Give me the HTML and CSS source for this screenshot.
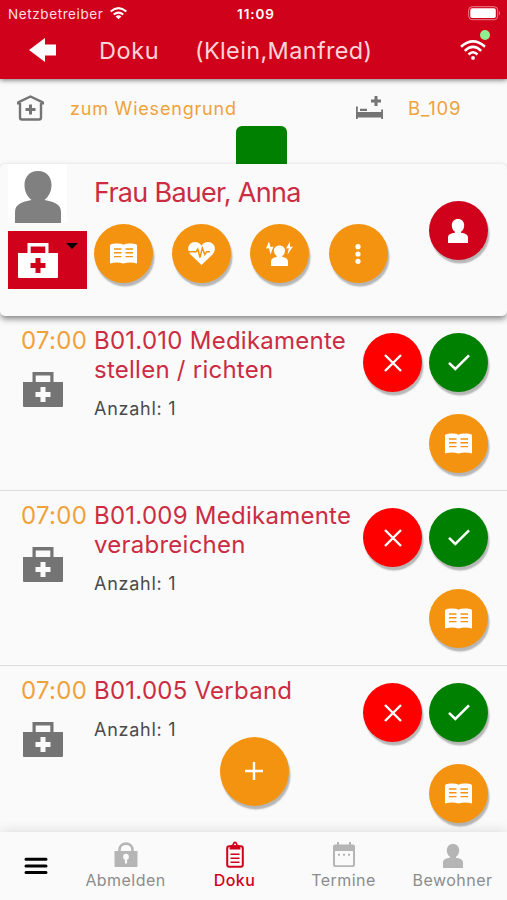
FILE: index.html
```html
<!DOCTYPE html>
<html lang="de">
<head>
    <meta charset="UTF-8">
    <meta name="viewport" content="width=device-width, initial-scale=1.0">
    <title>Doku</title>
    <link rel="stylesheet" href="styles.css">
</head>
<body>
    <!-- icons -->
    <svg class="sprite">
        <symbol id="wifi" viewBox="0 0 26 20">
            <g fill="none" stroke="currentColor" stroke-width="2.500">
                <path d="M1 6.800Q13-4 25 6.800"/>
                <path d="M4.800 10.800Q13 3 21.200 10.800"/>
                <path d="M8.500 14.500Q13 10 17.500 14.500"/>
            </g>
            <circle cx="13" cy="17.900" r="1.900" fill="currentColor"/>
        </symbol>
        <symbol id="book" viewBox="0 0 27 21">
            <path fill="currentColor" d="M0 2Q1 .6 5 .5Q11 0 13.500 1.800Q16 0 22 .5Q26 .6 27 2V20.500Q20 18.500 13.500 20.500Q7 18.500 0 20.500Z"/>
            <path fill="none" stroke="#f4930f" stroke-width="1.400" d="M4 6H11.500M4 9.800H11.500M4 13.600H11.500M15.500 6H23M15.500 9.800H23M15.500 13.600H23"/>
        </symbol>
        <symbol id="case" viewBox="0 0 40 35">
            <path fill="currentColor" fill-rule="evenodd" d="M9.500 0H30.500V10H40V34Q40 35 39 35H1Q0 35 0 34V10H9.500ZM12.700 3.400V10H27.300V3.400ZM17.500 15V20H12.500V25H17.500V30H22.500V25H27.500V20H22.500V15Z"/>
        </symbol>
        <symbol id="user" viewBox="0 0 46 52">
            <path fill="currentColor" d="M23 0C31.500 0 36.500 6 36.500 14C36.500 20 34 25.500 29.500 29C39 31 46 33 46 41V52H0V41C0 33 7 31 16.500 29C12 25.500 9.500 20 9.500 14C9.500 6 14.500 0 23 0Z"/>
        </symbol>
        <symbol id="person" viewBox="0 0 20 24">
            <path fill="currentColor" d="M10 0C13.800 0 16.200 2.600 16.200 6.200C16.200 9.200 14.900 11.500 13 12.800V13.800C17 14.300 20 15.600 20 18.600V24H0V18.600C0 15.600 3 14.300 7 13.800V12.800C5.100 11.500 3.800 9.200 3.800 6.200C3.800 2.600 6.200 0 10 0Z"/>
        </symbol>
        <symbol id="cross" viewBox="0 0 18 18">
            <path fill="none" stroke="currentColor" stroke-width="2.400" d="M1 1L17 17M17 1L1 17"/>
        </symbol>
        <symbol id="check" viewBox="0 0 22 17">
            <path fill="none" stroke="currentColor" stroke-width="2.500" d="M1 8.800L7.300 15L21 1.300"/>
        </symbol>
    </svg>

    <div class="app">
        <div class="status">
            <div class="carrier"><span>Netzbetreiber</span>
                <svg width="17" height="13" viewBox="0 0 17 13"><g fill="none" stroke="#fff" stroke-width="2"><path d="M.7 4.500Q8.500-2.300 16.300 4.500"/><path d="M3.700 7.600Q8.500 3.600 13.300 7.600"/></g><path fill="#fff" d="M5.600 9.400Q8.500 7.200 11.400 9.400L8.500 12.300Z"/></svg>
            </div>
            <div class="clock">11:09</div>
            <div class="battery">
                <svg width="33" height="15" viewBox="0 0 33 15"><rect x=".7" y=".7" width="29" height="13" rx="3.500" fill="none" stroke="#e9808c"/><rect x="2.300" y="2.300" width="25.500" height="9.800" rx="1.800" fill="#fff"/><path d="M31 5Q33 7.200 31 9.500Z" fill="#e9808c"/></svg>
            </div>
        </div>
        <div class="header">
            <svg class="back" width="27" height="24" viewBox="0 0 27 24"><path fill="#fff" d="M0 12L16 0V6.500H27V17.500H16V24Z"/></svg>
            <div class="title">Doku</div>
            <div class="name">(Klein,Manfred)</div>
            <div class="signal">
                <svg width="26" height="20"><use href="#wifi"/></svg>
                <div class="online"></div>
            </div>
        </div>

        <div class="place">
            <svg class="house" width="27" height="26" viewBox="0 0 27 26"><path fill="none" stroke="#747474" stroke-width="2.400" stroke-linejoin="round" d="M1.200 9.500V7.300L13.500 1.500L25.800 7.300V9.500M3 8V22.500Q3 24.500 5 24.500H22Q24 24.500 24 22.500V8"/><path fill="none" stroke="#747474" stroke-width="3" d="M13.500 9.500V19.500M8.500 14.500H18.500"/></svg>
            <div class="house-name">zum Wiesengrund</div>
            <svg class="bed" width="27" height="24" viewBox="0 0 27 24"><path fill="#747474" d="M0 10.500H1.800V16H25.200V13.500H27V23H25.200V21.500H1.800V23H0ZM4 12.800H11V15H4ZM18.500 0H21.500V3.500H25V6.500H21.500V10H18.500V6.500H15V3.500H18.500Z"/></svg>
            <div class="room">B_109</div>
        </div>
        <div class="tab"></div>

        <div class="patient">
            <div class="patient-side">
                <div class="photo"><svg width="46" height="52"><use href="#user"/></svg></div>
                <div class="kit">
                    <svg width="40" height="35"><use href="#case"/></svg>
                    <div class="arrow"></div>
                </div>
            </div>
            <div class="patient-main">
                <div class="patient-name">Frau Bauer, Anna</div>
                <div class="actions">
                    <div class="btn orange"><svg width="27" height="21"><use href="#book"/></svg></div>
                    <div class="btn orange">
                        <svg width="27" height="23" viewBox="0 0 27 23"><path fill="#fff" d="M13.500 23L2.500 12.500C-1 8.500-.3 3.500 3 1.300C6.500-1 11.300 0 13.500 3.800C15.700 0 20.500-1 24 1.300C27.300 3.500 28 8.500 24.500 12.500Z"/><path fill="none" stroke="#f4930f" stroke-width="1.500" d="M0 9.800H8L9.800 7L12 15.500L14.300 6L16.800 12.500L18.500 9.800H22"/></svg>
                    </div>
                    <div class="btn orange">
                        <svg width="27" height="25" viewBox="0 0 27 25"><path fill="#fff" d="M13.500 4.500C16.800 4.500 19 6.700 19 9.500C19 12 18 13.900 16.300 15V16C20 16.500 22 18 22 20.500V25H5V20.500C5 18 7 16.500 10.700 16V15C9 13.900 8 12 8 9.500C8 6.700 10.200 4.500 13.500 4.500ZM3 .5L0 7.500L3 7.200L4.500 13.500L7.500 5.500L4.500 6ZM24 .5L20 7.500L22.800 7.200L21.500 13.500L27 5.500L24 6Z"/></svg>
                    </div>
                    <div class="btn orange">
                        <svg width="6" height="20" viewBox="0 0 6 20"><g fill="#fff"><circle cx="3" cy="2.700" r="2.600"/><circle cx="3" cy="10" r="2.600"/><circle cx="3" cy="17.300" r="2.600"/></g></svg>
                    </div>
                </div>
            </div>
            <div class="btn red patient-btn"><svg width="20" height="24"><use href="#person"/></svg></div>
        </div>

        <div class="list">
            <div class="item">
                <div class="item-side">
                    <div class="time">07:00</div>
                    <svg width="40" height="35"><use href="#case"/></svg>
                </div>
                <div class="item-main">
                    <div class="task">B01.010 Medikamente<br>stellen / richten</div>
                    <div class="count">Anzahl: 1</div>
                </div>
                <div class="item-btns">
                    <div class="btn no"><svg width="18" height="18"><use href="#cross"/></svg></div>
                    <div class="btn yes"><svg width="22" height="17"><use href="#check"/></svg></div>
                    <div class="btn orange"><svg width="27" height="21"><use href="#book"/></svg></div>
                </div>
            </div>
            <div class="item">
                <div class="item-side">
                    <div class="time">07:00</div>
                    <svg width="40" height="35"><use href="#case"/></svg>
                </div>
                <div class="item-main">
                    <div class="task">B01.009 Medikamente<br>verabreichen</div>
                    <div class="count">Anzahl: 1</div>
                </div>
                <div class="item-btns">
                    <div class="btn no"><svg width="18" height="18"><use href="#cross"/></svg></div>
                    <div class="btn yes"><svg width="22" height="17"><use href="#check"/></svg></div>
                    <div class="btn orange"><svg width="27" height="21"><use href="#book"/></svg></div>
                </div>
            </div>
            <div class="item">
                <div class="item-side">
                    <div class="time">07:00</div>
                    <svg width="40" height="35"><use href="#case"/></svg>
                </div>
                <div class="item-main">
                    <div class="task">B01.005 Verband</div>
                    <div class="count">Anzahl: 1</div>
                </div>
                <div class="item-btns">
                    <div class="btn no"><svg width="18" height="18"><use href="#cross"/></svg></div>
                    <div class="btn yes"><svg width="22" height="17"><use href="#check"/></svg></div>
                    <div class="btn orange"><svg width="27" height="21"><use href="#book"/></svg></div>
                </div>
            </div>
        </div>

        <div class="btn orange add">
            <svg width="18" height="18" viewBox="0 0 18 18"><path fill="none" stroke="#fff" stroke-width="2.400" d="M9 0V18M0 9H18"/></svg>
        </div>

        <div class="nav">
            <div class="menu">
                <svg width="24" height="18" viewBox="0 0 24 18"><path fill="none" stroke="#000" stroke-width="3" stroke-linecap="round" d="M2 2.200H22M2 9H22M2 15.500H22"/></svg>
            </div>
            <div class="nav-item">
                <svg width="24" height="26" viewBox="0 0 24 26"><path fill="none" stroke="#b5b5b5" stroke-width="2.600" d="M5.500 10V8C5.500-.5 18.500-.5 18.500 8V10"/><path fill="#b5b5b5" d="M.5 9H23.500V24Q23.500 25 22.500 25H1.500Q.5 25 .5 24Z"/><circle cx="12" cy="14.700" r="2.900" fill="#fafafa"/><path d="M12 16V21.500" stroke="#fafafa" stroke-width="2.200"/></svg>
                <div>Abmelden</div>
            </div>
            <div class="nav-item active">
                <svg width="18" height="27" viewBox="0 0 18 27"><rect x="1.200" y="5.200" width="15.600" height="20.600" rx="2" fill="none" stroke="#d0021b" stroke-width="2"/><path fill="#d0021b" fill-rule="evenodd" d="M3.500 8.500Q3.500 4 6.500 3.500Q7 .5 9 .5Q11 .5 11.500 3.500Q14.500 4 14.500 8.500ZM9 2.500A1 1 0 1 0 9 4.500A1 1 0 1 0 9 2.500Z"/><path stroke="#d0021b" stroke-width="1.600" d="M4.500 13.200H13.500M4.500 17.200H13.500M4.500 21.200H13.500"/></svg>
                <div>Doku</div>
            </div>
            <div class="nav-item">
                <svg width="22" height="26" viewBox="0 0 22 26"><path fill="#b5b5b5" fill-rule="evenodd" d="M4 0H6V2.500H16V0H18V2.500H20Q22 2.500 22 4.500V23Q22 25 20 25H2Q0 25 0 23V4.500Q0 2.500 2 2.500H4ZM2 9V22.500Q2 23.200 2.700 23.200H19.300Q20 23.200 20 22.500V9Z"/><path stroke="#b5b5b5" stroke-width="2" stroke-dasharray="2 3" d="M5 12.800H17"/></svg>
                <div>Termine</div>
            </div>
            <div class="nav-item">
                <svg width="20" height="24"><use href="#person"/></svg>
                <div>Bewohner</div>
            </div>
        </div>
    </div>
</body>
</html>
```
FILE: styles.css
```css
* {
    margin: 0;
    padding: 0;
    box-sizing: border-box;
}
body {
    background: #fafafa;
    font-family: Inter, "Liberation Sans", sans-serif;
    color: #4a4a4a;
    overflow: hidden;
}
svg {
    display: block;
    flex-shrink: 0;
}
.sprite {
    position: absolute;
    width: 0;
    height: 0;
}
.app {
    position: relative;
    width: 507px;
    height: 900px;
    display: flex;
    flex-direction: column;
    overflow: hidden;
    white-space: nowrap;
}
.status {
    height: 27px;
    flex-shrink: 0;
    display: grid;
    grid-template-columns: 1fr 60px 1fr;
    align-items: center;
    background: #d0021b;
    color: white;
    font-size: 13.5px;
    padding: 0 6px 0 8px;
    z-index: 3;
}
.carrier {
    display: flex;
    gap: 7px;
    align-items: center;
    color: #ffdfe2;
    letter-spacing: 0.6px;
}
.clock {
    font-weight: 600;
    text-align: center;
    letter-spacing: 0.9px;
    padding-left: 3px;
}
.battery {
    display: flex;
    justify-content: flex-end;
}
.header {
    height: 52px;
    flex-shrink: 0;
    display: flex;
    align-items: center;
    background: #d0021b;
    color: #ffd5da;
    font-size: 23.5px;
    letter-spacing: 0.35px;
    padding: 0 21px 6px 29px;
    box-shadow: 0 1px 5px rgba(0, 0, 0, 0.55);
    z-index: 2;
}
.title {
    width: 96px;
    margin-left: 43px;
    letter-spacing: 0.6px;
}
.signal {
    position: relative;
    color: white;
    margin-left: auto;
}
.online {
    position: absolute;
    top: -10px;
    right: -4px;
    width: 10px;
    height: 10px;
    border-radius: 50%;
    background: #90ee90;
}
.place {
    height: 47px;
    flex-shrink: 0;
    display: flex;
    align-items: center;
    padding: 11px 0 0 17px;
    color: #efa23a;
    font-size: 18px;
    letter-spacing: 0.8px;
}
.house-name {
    width: 312px;
    padding-left: 26px;
}
.room {
    padding-left: 25px;
    font-size: 18.5px;
    letter-spacing: 0.8px;
}
.tab {
    width: 51px;
    height: 38px;
    flex-shrink: 0;
    margin-left: 236px;
    background: #008000;
    border-radius: 6px 6px 0 0;
}
.patient {
    height: 152px;
    flex-shrink: 0;
    display: flex;
    background: #fafafa;
    border-radius: 5px;
    padding-left: 8px;
    box-shadow: 0 4px 6px -1px rgba(0, 0, 0, 0.45), 0 0 4px rgba(0, 0, 0, 0.08);
    z-index: 1;
}
.patient-side {
    width: 86px;
}
.photo {
    width: 59px;
    height: 59px;
    background: white;
    color: #808080;
    padding: 7px 0 0 7px;
}
.kit {
    width: 78.5px;
    height: 58.5px;
    margin-top: 7.5px;
    display: flex;
    gap: 8px;
    background: #d0021b;
    color: white;
    padding: 12px 0 0 10px;
}
.arrow {
    width: 0;
    height: 0;
    border: 6px solid transparent;
    border-top: 6px solid black;
}
.patient-main {
    width: 334.5px;
}
.patient-name {
    height: 60px;
    line-height: 57px;
    font-size: 27px;
    color: #cb2c42;
    letter-spacing: -0.72px;
}
.actions {
    display: flex;
    gap: 19.2px;
}
.btn {
    width: 59px;
    height: 59px;
    flex-shrink: 0;
    border-radius: 50%;
    display: flex;
    align-items: center;
    justify-content: center;
    color: white;
    box-shadow: 1.5px 3.5px 1.5px rgba(0, 0, 0, 0.27);
}
.orange {
    background: #f4930f;
}
.red {
    background: #d0021b;
}
.no {
    background: #ff0000;
}
.yes {
    background: #008000;
}
.patient-btn {
    margin-top: 37px;
}
.list {
    height: 516px;
    flex-shrink: 0;
    overflow: hidden;
}
.item {
    height: 174.9px;
    display: flex;
    padding: 10.3px 19px 0 21px;
    border-bottom: 1.5px solid #dcdcdc;
}
.item-side {
    width: 73px;
    color: #747474;
}
.item-side svg {
    margin: 17px 0 0 1.5px;
}
.time {
    height: 29px;
    line-height: 29px;
    font-size: 24px;
    color: #efa23a;
    letter-spacing: 0.3px;
}
.item-main {
    width: 268px;
}
.task {
    font-size: 24px;
    line-height: 29px;
    color: #cb2c42;
    letter-spacing: 0.25px;
}
.count {
    font-size: 18px;
    line-height: 22px;
    margin-top: 13.7px;
    letter-spacing: 0.75px;
}
.item-btns {
    width: 126px;
    height: 141px;
    padding-top: 7px;
    display: flex;
    flex-wrap: wrap;
    justify-content: flex-end;
    align-content: flex-start;
    gap: 22px 7px;
}
.add {
    position: absolute;
    left: 219.5px;
    top: 736.5px;
    width: 69px;
    height: 69px;
    z-index: 3;
}
.nav {
    height: 68px;
    flex-shrink: 0;
    display: flex;
    background: #fafafa;
    box-shadow: 0 0 12px rgba(0, 0, 0, 0.14);
    z-index: 2;
}
.menu {
    width: 71px;
    padding: 25px 0 0 24px;
}
.nav-item {
    width: 109px;
    display: flex;
    flex-direction: column;
    align-items: center;
    justify-content: flex-end;
    gap: 2.5px;
    padding-bottom: 10px;
    font-size: 16px;
    line-height: 20px;
    color: #8c8c8c;
    letter-spacing: 0.45px;
}
.nav-item svg {
    color: #b5b5b5;
}
.active {
    color: #d0021b;
    font-weight: 500;
}
```
